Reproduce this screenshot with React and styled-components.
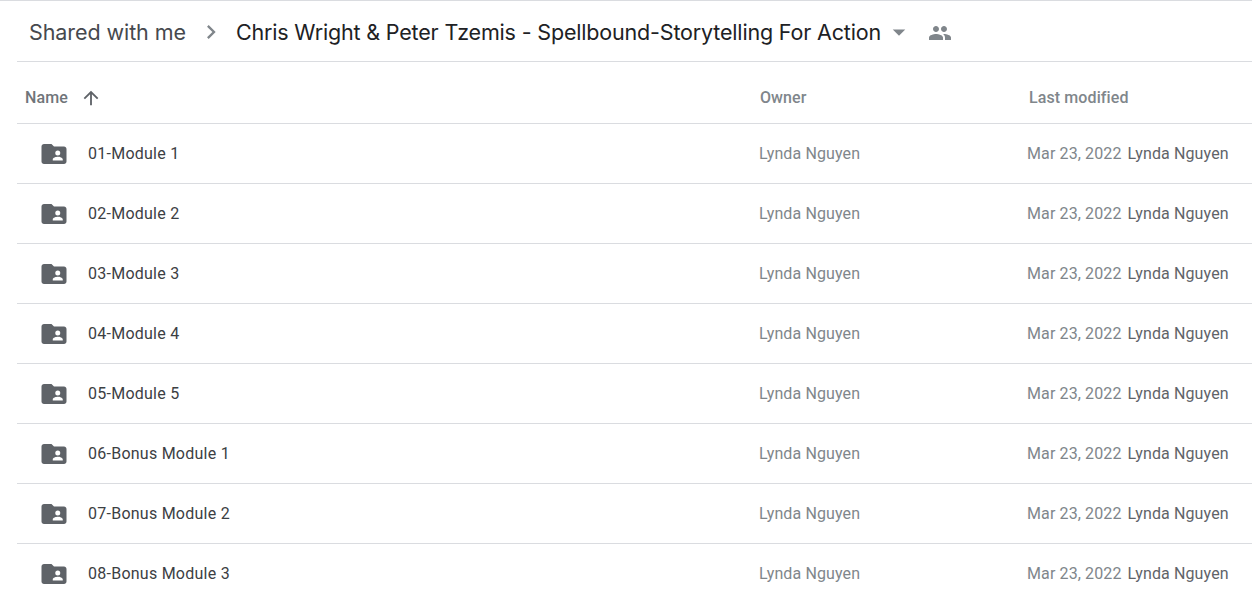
import React from "react";
import styled, { createGlobalStyle } from "styled-components";

const Global = createGlobalStyle`
  html, body { margin: 0; padding: 0; background: #fff; overflow: hidden; }
  body { font-family: Roboto, "Liberation Sans", sans-serif; }
`;

const Page = styled.div`
  width: 1252px;
  height: 599px;
  overflow: hidden;
  border-top: 1px solid #dadce0;
  box-sizing: border-box;
  padding-left: 17px;
`;

const Breadcrumb = styled.header`
  height: 61px;
  box-sizing: border-box;
  border-bottom: 1px solid #dadce0;
  display: flex;
  align-items: center;
  padding-left: 12px;
  padding-top: 1px;
`;

const Crumb = styled.span`
  font-family: Inter, sans-serif;
  font-size: 21.5px;
  letter-spacing: ${(p) => p.$spacing};
  color: ${(p) => p.$color};
  white-space: nowrap;
`;

const Chevron = styled.svg`
  width: 28px;
  height: 28px;
  margin: 0 11px 0 11px;
  fill: #80868b;
`;

const Caret = styled.svg`
  width: 30px;
  height: 30px;
  margin-left: 3px;
  fill: #80868b;
`;

const People = styled.svg`
  width: 24px;
  height: 24px;
  margin: 2px 0 0 14px;
  fill: #80868b;
`;

const Row = styled.div`
  display: grid;
  grid-template-columns: 741px 269px 1fr;
  height: 60px;
  box-sizing: border-box;
  border-bottom: 1px solid #dadce0;
  align-items: center;
  font-size: 16px;
  letter-spacing: 0.12px;
`;

const HeaderRow = styled(Row)`
  height: 62px;
  padding-top: 10px;
  font-weight: 500;
  letter-spacing: 0.1px;
`;

const HeaderName = styled.div`
  display: flex;
  align-items: center;
  padding-left: 8px;
  color: #70757a;
`;

const SortArrow = styled.svg`
  width: 22px;
  height: 22px;
  margin-left: 12px;
  fill: #5f6368;
`;

const HeaderCell = styled.div`
  padding-left: 2px;
  color: #80868b;
`;

const NameCell = styled.div`
  display: flex;
  align-items: center;
  padding-left: 22px;
  color: #3c4043;
  font-weight: 450;
  letter-spacing: 0.25px;
`;

const FolderIcon = styled.svg`
  width: 30px;
  height: 30px;
  margin-right: 19px;
  fill: #5f6368;
`;

const OwnerCell = styled.div`
  color: #80868b;
  padding-left: 1px;
`;

const ModifiedCell = styled.div`
  display: flex;
  white-space: nowrap;
`;

const DateText = styled.span`
  color: #80868b;
  margin-right: 6px;
`;

const ByText = styled.span`
  color: #5f6368;
`;

const items = [
  "01-Module 1",
  "02-Module 2",
  "03-Module 3",
  "04-Module 4",
  "05-Module 5",
  "06-Bonus Module 1",
  "07-Bonus Module 2",
  "08-Bonus Module 3",
];

const Folder = () => (
  <FolderIcon viewBox="0 0 24 24">
    <path
      fillRule="evenodd"
      d="M4 4h6l2 2h8c1.1 0 2 .9 2 2v10c0 1.1-.9 2-2 2H4c-1.1 0-2-.9-2-2V6c0-1.1.9-2 2-2zm11 5.2a2 2 0 1 0 0 4 2 2 0 0 0 0-4zM11 17.200h8v-1c0-1.300-2.700-2-4-2s-4 .7-4 2z"
    />
  </FolderIcon>
);

export default function App() {
  return (
    <>
      <Global />
      <Page>
        <Breadcrumb>
          <Crumb $color="#46494e" $spacing="-0.08px">Shared with me</Crumb>
          <Chevron viewBox="0 0 24 24">
            <path d="M8.600 16.600 13.200 12 8.600 7.400 10 6l6 6-6 6z" />
          </Chevron>
          <Crumb $color="#202124" $spacing="-0.17px">
            Chris Wright &amp; Peter Tzemis - Spellbound-Storytelling For Action
          </Crumb>
          <Caret viewBox="0 0 24 24">
            <path d="M7 10l5 5 5-5z" />
          </Caret>
          <People viewBox="0 0 24 24">
            <path d="M16 11c1.660 0 2.990-1.340 2.990-3S17.660 5 16 5s-3 1.340-3 3 1.340 3 3 3zm-8 0c1.660 0 2.990-1.340 2.990-3S9.660 5 8 5 5 6.340 5 8s1.340 3 3 3zm0 2c-2.330 0-7 1.170-7 3.500V19h14v-2.500C15 14.170 10.330 13 8 13zm8 0c-.29 0-.62.020-.97.050 1.160.84 1.970 1.970 1.970 3.450V19h6v-2.500c0-2.330-4.670-3.500-7-3.500z" />
          </People>
        </Breadcrumb>
        <HeaderRow>
          <HeaderName>
            Name
            <SortArrow viewBox="0 0 24 24">
              <path d="M4 12l1.410 1.410L11 7.830V20h2V7.830l5.580 5.590L20 12l-8-8-8 8z" />
            </SortArrow>
          </HeaderName>
          <HeaderCell>Owner</HeaderCell>
          <HeaderCell>Last modified</HeaderCell>
        </HeaderRow>
        {items.map((name) => (
          <Row key={name}>
            <NameCell>
              <Folder />
              {name}
            </NameCell>
            <OwnerCell>Lynda Nguyen</OwnerCell>
            <ModifiedCell>
              <DateText>Mar 23, 2022</DateText>
              <ByText>Lynda Nguyen</ByText>
            </ModifiedCell>
          </Row>
        ))}
      </Page>
    </>
  );
}
